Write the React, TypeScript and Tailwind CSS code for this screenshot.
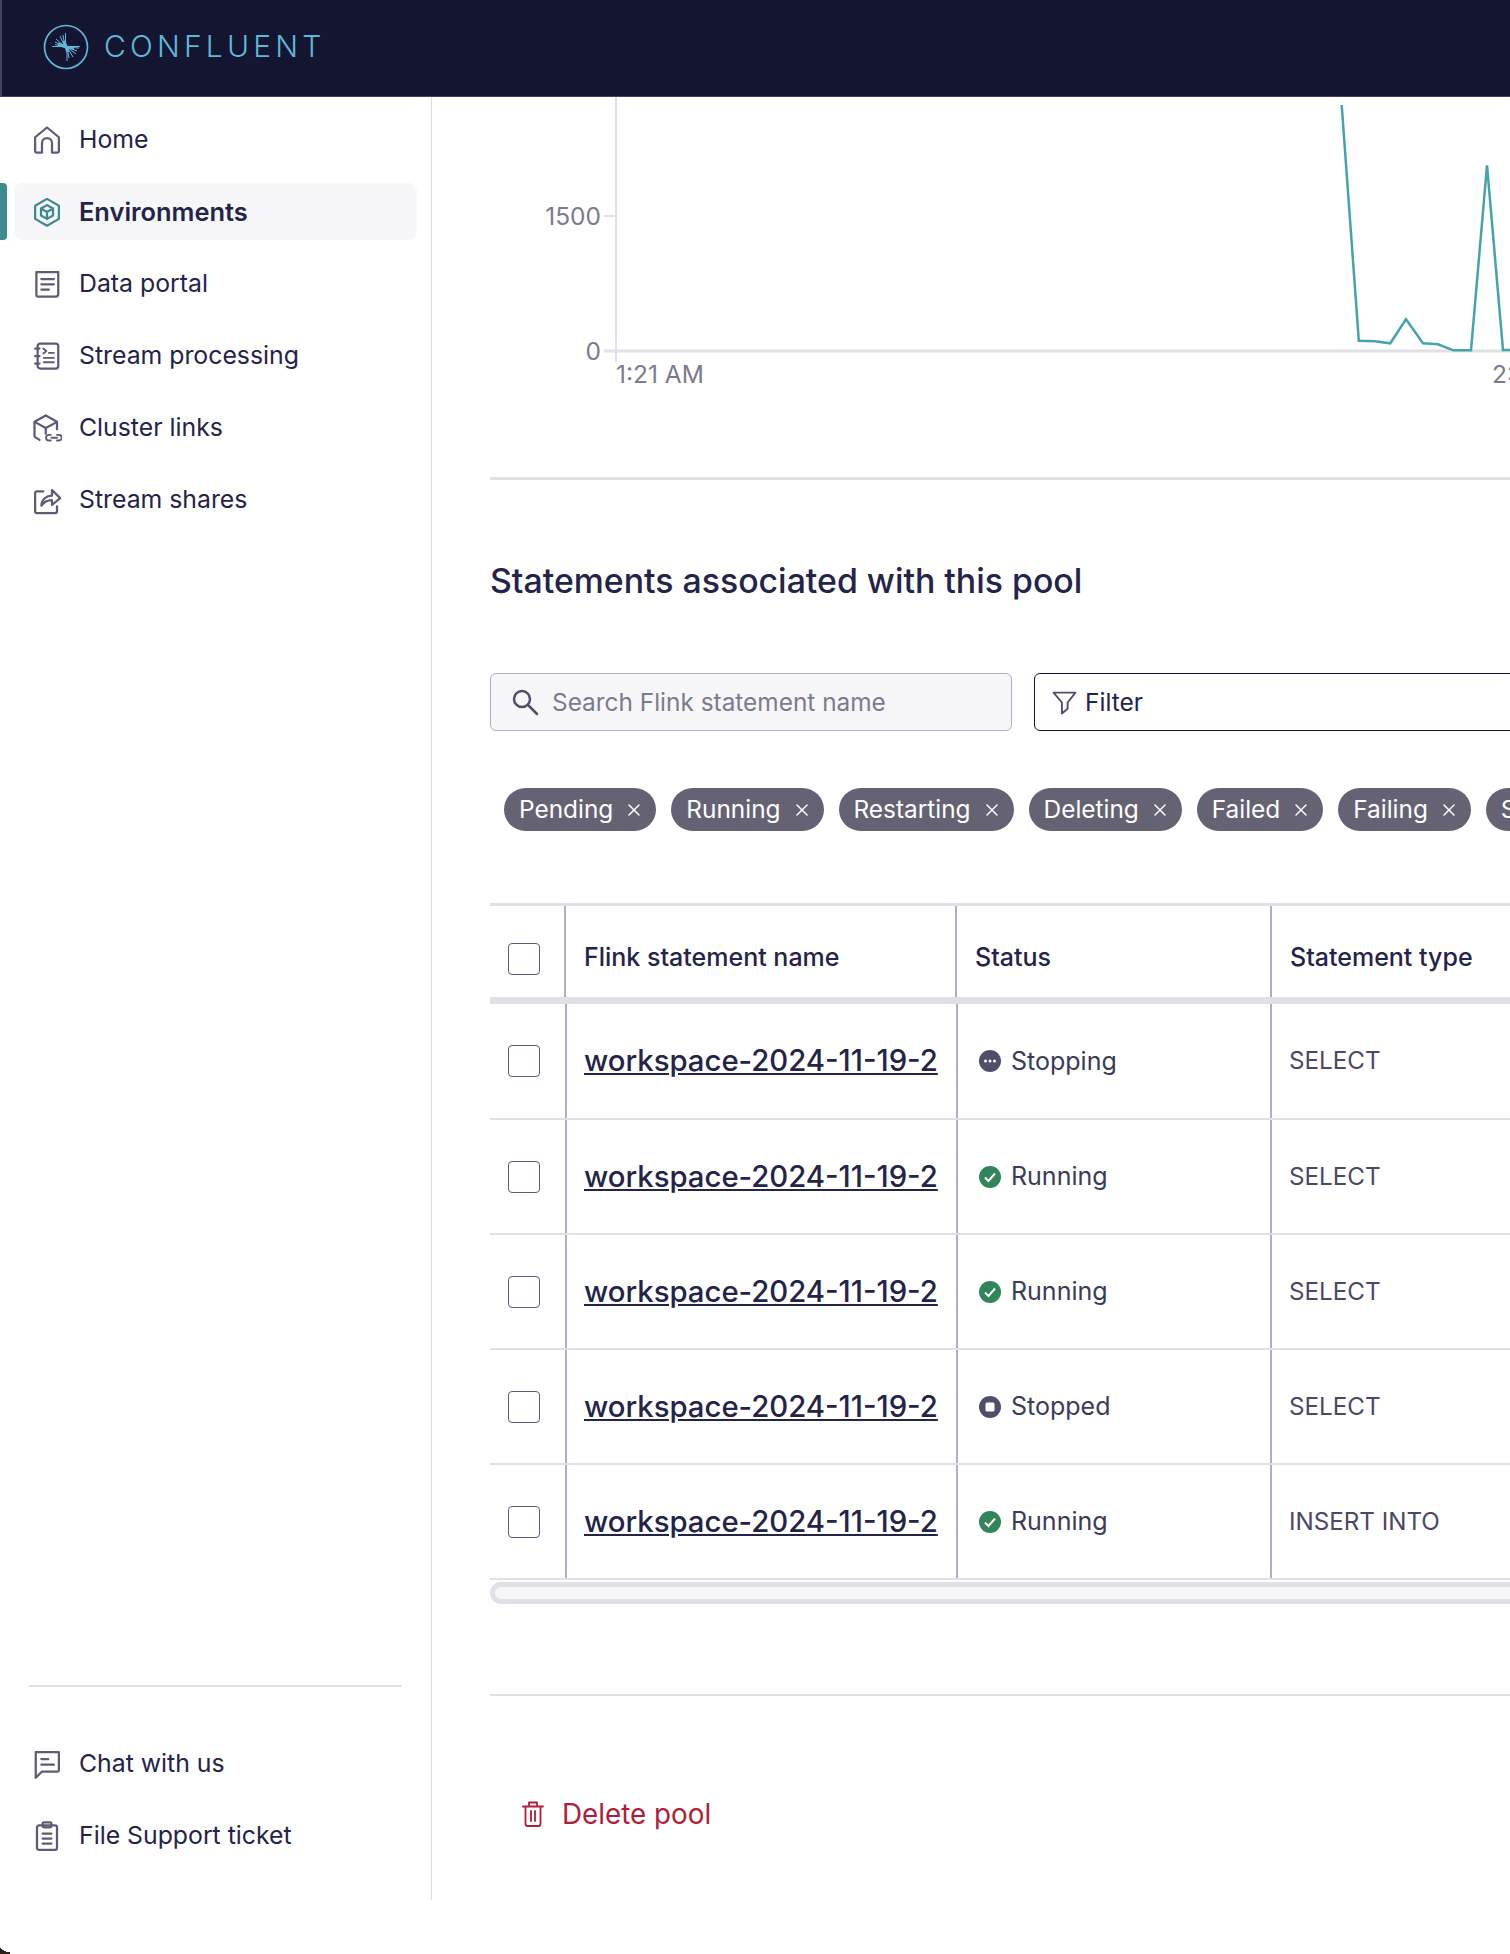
import { X } from 'lucide-react';

const iconProps = {
  fill: 'none',
  stroke: 'currentColor',
  strokeWidth: 1.8,
  strokeLinecap: 'round' as const,
  strokeLinejoin: 'round' as const,
  viewBox: '0 0 24 24',
};

function HomeIcon() {
  return (
    <svg {...iconProps} className="w-[30px] h-[30px] text-[#5d5b78]">
      <path d="M2.500 9.800 12 2l9.500 7.800V21a1 1 0 0 1-1 1H16v-7.500a4 4 0 0 0-8 0V22H3.500a1 1 0 0 1-1-1z" />
    </svg>
  );
}

function EnvironmentsIcon() {
  return (
    <svg {...iconProps} className="w-[30px] h-[30px] text-[#3d8a8f]">
      <path d="M12 1.500 21.500 7v10.500L12 23l-9.500-5.500V7z" />
      <path d="M12 6.500 16.800 9.200v5.600L12 17.500l-4.800-2.700V9.200z" />
      <path d="M7.400 9.400 12 12l4.600-2.600M12 12v5.400" />
    </svg>
  );
}

function DataPortalIcon() {
  return (
    <svg {...iconProps} className="w-[30px] h-[30px] text-[#5d5b78]">
      <path d="M3.500 2.500h17.500V20a2 2 0 0 1-2 2H4.500a1 1 0 0 1-1-1z" />
      <path d="M7.500 8h10M7.500 12.200h10M7.500 16.400h6" />
    </svg>
  );
}

function StreamProcessingIcon() {
  return (
    <svg {...iconProps} className="w-[30px] h-[30px] text-[#5d5b78]">
      <rect x="4.500" y="2" width="16.500" height="20" rx="2" />
      <path d="M2.500 6h3.500M2.500 12h3.500M2.500 18h3.500" />
      <path d="m9 6 2.500 2L9 10M13.500 9.500h4M9.500 13.500h8M9.500 17h8" strokeWidth="1.500" />
    </svg>
  );
}

function ClusterLinksIcon() {
  return (
    <svg {...iconProps} className="w-[30px] h-[30px] text-[#5d5b78]">
      <path d="M6 21.500 2.800 19.500a1.500 1.500 0 0 1-.8-1.300V7L11 2l9 5v6" />
      <path d="m2.500 7.300 8.500 4.700 8.800-4.700M11 12v4.500" />
      <path d="M15 17.500h-1.500a2.200 2.200 0 0 0 0 4.500H15M20 17.500h1.500a2.200 2.200 0 0 1 0 4.500H20M15.500 19.800h4.500" strokeWidth="1.500" />
    </svg>
  );
}

function StreamSharesIcon() {
  return (
    <svg {...iconProps} className="w-[30px] h-[30px] text-[#5d5b78]">
      <path d="M9 5H4a1.500 1.500 0 0 0-1.500 1.500V21A1.500 1.500 0 0 0 4 22.500h14.500A1.500 1.500 0 0 0 20 21v-4" />
      <path d="M7.500 16.500c.3-5 4-8 8.500-8V4l6.500 6.500L16 16v-4c-3.500 0-6.500 1.500-8.500 4.500z" />
    </svg>
  );
}

function ChatIcon() {
  return (
    <svg {...iconProps} className="w-[30px] h-[30px] text-[#5d5b78]">
      <path d="M3 2.500h18.500V17a1 1 0 0 1-1 1H8l-5 5z" />
      <path d="M7.500 8h5.500M7.500 12.500h10" />
    </svg>
  );
}

function TicketIcon() {
  return (
    <svg {...iconProps} className="w-[30px] h-[30px] text-[#5d5b78]">
      <rect x="4" y="3.500" width="16" height="19.500" rx="1.500" />
      <rect x="8.500" y="1" width="7" height="4" rx="1" />
      <path d="M8.500 10h7M8.500 14h7M8.500 18h7" />
    </svg>
  );
}

function TrashIcon() {
  return (
    <svg {...iconProps} className="w-[22px] h-[26px] text-[#ae1e3a]" viewBox="0 0 22 26">
      <path d="M1 5.500h20M7 5.500V1.500h8v4M3.500 5.500V23a2 2 0 0 0 2 2h11a2 2 0 0 0 2-2V5.500M9 10v10M13 10v10" />
    </svg>
  );
}

function ConfluentLogo() {
  return (
    <svg viewBox="0 0 46 46" className="w-[46px] h-[46px] text-[#5fb8d8]" fill="none" stroke="currentColor">
      <circle cx="23" cy="23" r="21.500" strokeWidth="1.700" />
      <path
        strokeWidth="1"
        d="M9 22.500h28M22.500 9v14M24 23v14M22 23l-9-8M22 23l-10-5M22 23l-10-2.500M22 23l-5-11M22 23l-2-12M24 23l10 4M24 23l9 7M24 23l6 10M24 23l2 11M24 23l12 1"
      />
      <path strokeWidth="3" d="M15 20l8 3 8 1M21 17l2 6 2 5" />
    </svg>
  );
}

function StoppingIcon() {
  return (
    <svg viewBox="0 0 22 22" className="w-[22px] h-[22px]">
      <circle cx="11" cy="11" r="11" fill="#4f4e6d" />
      <circle cx="6.500" cy="11" r="1.500" fill="#fff" />
      <circle cx="11" cy="11" r="1.500" fill="#fff" />
      <circle cx="15.500" cy="11" r="1.500" fill="#fff" />
    </svg>
  );
}

function RunningIcon() {
  return (
    <svg viewBox="0 0 22 22" className="w-[22px] h-[22px]">
      <circle cx="11" cy="11" r="11" fill="#32845a" />
      <path d="m6 11.500 3.500 3.500L16 7.500" fill="none" stroke="#fff" strokeWidth="2" />
    </svg>
  );
}

function StoppedIcon() {
  return (
    <svg viewBox="0 0 22 22" className="w-[22px] h-[22px]">
      <circle cx="11" cy="11" r="11" fill="#4f4e6d" />
      <rect x="6.500" y="6.500" width="9" height="9" rx="1.500" fill="#fff" />
    </svg>
  );
}

const navItems = [
  { label: 'Home', icon: <HomeIcon /> },
  { label: 'Environments', icon: <EnvironmentsIcon />, active: true },
  { label: 'Data portal', icon: <DataPortalIcon /> },
  { label: 'Stream processing', icon: <StreamProcessingIcon /> },
  { label: 'Cluster links', icon: <ClusterLinksIcon /> },
  { label: 'Stream shares', icon: <StreamSharesIcon /> },
];

const filters = ['Pending', 'Running', 'Restarting', 'Deleting', 'Failed', 'Failing', 'Stopping'];

const rows = [
  { status: 'Stopping', icon: <StoppingIcon />, type: 'SELECT' },
  { status: 'Running', icon: <RunningIcon />, type: 'SELECT' },
  { status: 'Running', icon: <RunningIcon />, type: 'SELECT' },
  { status: 'Stopped', icon: <StoppedIcon />, type: 'SELECT' },
  { status: 'Running', icon: <RunningIcon />, type: 'INSERT INTO' },
];

function NavItem({ label, icon, active }: { label: string; icon: React.ReactNode; active?: boolean }) {
  return (
    <div
      className={`relative flex items-center gap-[17px] h-[57px] ml-[14px] w-[403px] pl-[18px] rounded-lg text-[#24234a] ${
        active ? 'bg-[#f7f7fa] font-semibold text-[25.400px]' : 'text-[24.800px]'
      }`}
    >
      {active && <span className="absolute -left-[14px] top-0 h-full w-[7px] rounded-r bg-[#3d8a8f]" />}
      {icon}
      <span className="pt-[1px]">{label}</span>
    </div>
  );
}

function Checkbox() {
  return <div className="w-[32px] h-[32px] rounded bg-white border-[1.500px] border-[#5d5b78]" />;
}

function UsageChart() {
  return (
    <svg width="1020" height="300" className="block" fontFamily="Inter, sans-serif" fontSize="24.500" fill="#7c7a8f">
      <path d="M126 0v265" stroke="#e0e0e6" strokeWidth="2" fill="none" />
      <path d="M114 119h12" stroke="#e0e0e6" strokeWidth="2" fill="none" />
      <path d="M114 254h906" stroke="#e0e0e6" strokeWidth="3" fill="none" />
      <text x="111" y="128" textAnchor="end">1500</text>
      <text x="111" y="263" textAnchor="end">0</text>
      <text x="126" y="286">1:21 AM</text>
      <text x="1002" y="286">2:21 AM</text>
      <polyline
        fill="none"
        stroke="#47a3ab"
        strokeWidth="2.500"
        points="851.700,8 868.800,243.700 884.600,244.300 900.300,246.300 916,222.300 933,246.300 948,247.300 963.400,253.300 981,253.300 997,68.300 1013,253 1020,253"
      />
    </svg>
  );
}

export default function App() {
  return (
    <div className="relative w-[1510px] h-[1954px] overflow-hidden bg-white font-['Inter',sans-serif] text-[#24234a]">
      <header className="flex items-center gap-[15px] h-[97px] pl-[41px] pb-[3px] bg-[#141530] border-b border-l-2 border-[#45445f]">
        <ConfluentLogo />
        <span className="text-[30px] font-[350] tracking-[4.200px] text-[#5fb8d8]">CONFLUENT</span>
      </header>

      <div className="flex">
        <aside className="flex flex-col w-[432px] h-[1803px] shrink-0 pt-[14px] pb-[36px] border-r border-[#dedee3]">
          <nav className="flex flex-col gap-[15px]">
            {navItems.map((item) => (
              <NavItem key={item.label} {...item} />
            ))}
          </nav>
          <div className="mt-auto mx-[29px] mb-[48px] h-[2px] bg-[#e0e0e6]" />
          <div className="flex flex-col gap-[15px]">
            <NavItem label="Chat with us" icon={<ChatIcon />} />
            <NavItem label="File Support ticket" icon={<TicketIcon />} />
          </div>
        </aside>

        <main className="flex-1 min-w-0 overflow-hidden pl-[58px]">
          <UsageChart />
          <div className="mt-[80px] h-[3px] bg-[#e0e0e6]" />

          <h2 className="mt-[79px] text-[33.850px] leading-[44px] font-medium">Statements associated with this pool</h2>

          <div className="flex gap-[22px] mt-[70px]">
            <div className="flex items-center gap-[13px] w-[522px] h-[58px] shrink-0 pl-[20px] bg-[#f7f7fa] border border-[#b0aec0] rounded-md text-[24.400px] text-[#7c7a8f]">
              <svg viewBox="0 0 28 28" className="w-[28px] h-[28px] text-[#4f4e6d]" fill="none" stroke="currentColor" strokeWidth="2.500" strokeLinecap="round">
                <circle cx="11" cy="11" r="8" />
                <path d="m17 17 9 9" />
              </svg>
              <span className="pt-[1px]">Search Flink statement name</span>
            </div>
            <div className="flex items-center gap-[8px] w-[600px] h-[58px] shrink-0 pl-[17px] border border-[#14142f] rounded-md text-[24.500px]">
              <svg viewBox="0 0 24 24" className="w-[25px] h-[25px] text-[#4f4e6d]" fill="none" stroke="currentColor" strokeWidth="1.800" strokeLinejoin="round">
                <path d="M1.500 2.500h21L15 12v6l-5.500 4.500V12z" />
              </svg>
              <span className="pt-[1px]">Filter</span>
            </div>
          </div>

          <div className="flex gap-[15px] mt-[57px] ml-[14px] w-[1200px]">
            {filters.map((f) => (
              <div key={f} className="flex items-center gap-[11px] h-[43px] pl-[15px] pr-[12px] rounded-full bg-[#656373] text-[24.400px] text-white">
                <span>{f}</span>
                <X className="w-[20px] h-[20px]" strokeWidth={1.8} />
              </div>
            ))}
          </div>

          <div className="mt-[72px] w-[1200px] text-[25px]">
            <div className="flex h-[101px] border-t-[3px] border-b-[7px] border-[#e0e0e6] font-medium">
              <div className="flex items-center w-[74px] pl-[18px] pt-[15px]">
                <Checkbox />
              </div>
              <div className="flex items-center w-[391px] pl-[18px] pt-[12px] border-l-2 border-[#b0aec0]">Flink statement name</div>
              <div className="flex items-center w-[315px] pl-[18px] pt-[12px] border-l-2 border-[#b0aec0]">Status</div>
              <div className="flex items-center pl-[18px] pt-[12px] border-l-2 border-[#b0aec0]">Statement type</div>
            </div>
            {rows.map((row, i) => (
              <div key={i} className={`flex border-b-2 border-[#e0e0e6] ${i === 0 ? 'h-[116px]' : 'h-[115px]'}`}>
                <div className="flex items-center w-[75px] pl-[18px]">
                  <Checkbox />
                </div>
                <div className="flex items-center w-[391px] pl-[17px] border-l-2 border-[#b0aec0]">
                  <a className="text-[29.300px] font-medium underline">workspace-2024-11-19-2</a>
                </div>
                <div className="flex items-center gap-[10px] w-[314px] pl-[21px] border-l-2 border-[#b0aec0] text-[#3b3a58]">
                  {row.icon}
                  <span className="pt-[1px]">{row.status}</span>
                </div>
                <div className="flex items-center pl-[17px] pt-[1px] border-l-2 border-[#b0aec0] text-[#4a4866] text-[24.200px]">{row.type}</div>
              </div>
            ))}
            <div className="mt-[2px] h-[22px] p-[5px] bg-[#e0e0e6] rounded-l-xl">
              <div className="h-full bg-[#f7f7fa] rounded-l-full" />
            </div>
          </div>

          <div className="mt-[90px] h-[2px] bg-[#e0e0e6]" />

          <div className="flex items-center gap-[18px] mt-[98px] pl-[32px] text-[27.800px] leading-[40px] text-[#ae1e3a]">
            <TrashIcon />
            <span>Delete pool</span>
          </div>
        </main>
      </div>

      <div className="absolute bottom-0 left-0 w-[10px] h-[14px] bg-[radial-gradient(circle_at_100%_0%,transparent_70%,#2a2018_72%)]" />
    </div>
  );
}
